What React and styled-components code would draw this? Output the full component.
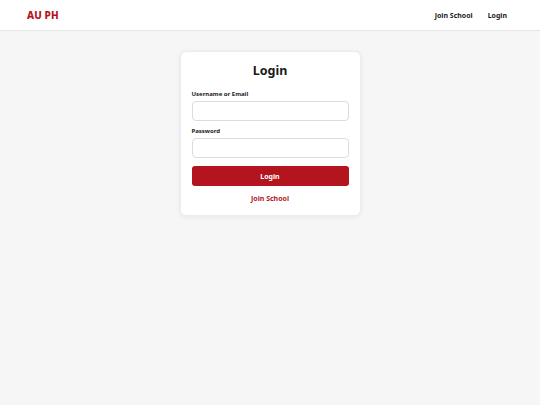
import React from "react";
import styled, { createGlobalStyle } from "styled-components";

const Global = createGlobalStyle`
  html, body { margin: 0; padding: 0; }
  body {
    background: #f6f6f6;
    font-family: "Noto Sans", "Open Sans", sans-serif;
    color: #1f1f1f;
  }
  * { box-sizing: border-box; }
`;

const Page = styled.div`
  min-height: 405px;
  background: #f6f6f6;
`;

const Header = styled.header`
  height: 31px;
  background: #ffffff;
  border-bottom: 1px solid #e6e6e6;
  display: flex;
  align-items: center;
  justify-content: space-between;
  padding: 0 33px 0 27px;
`;

const Brand = styled.div`
  color: #b3141e;
  font-weight: 800;
  font-size: 10px;
  letter-spacing: 0.1px;
`;

const Nav = styled.nav`
  display: flex;
  gap: 15px;
`;

const NavLink = styled.a`
  font-size: 7px;
  font-weight: 700;
  color: #1a1a1a;
  text-decoration: none;
`;

const Main = styled.main`
  display: flex;
  justify-content: center;
  padding-top: 20px;
`;

const Card = styled.div`
  width: 181px;
  background: #ffffff;
  border: 1px solid #ececec;
  border-radius: 6px;
  box-shadow: 0 1px 5px rgba(0, 0, 0, 0.07);
  padding: 11px 11px 11px;
  display: flex;
  flex-direction: column;
`;

const Title = styled.h1`
  margin: 0 0 11px;
  font-size: 12.5px;
  line-height: 16px;
  font-weight: 700;
  text-align: center;
  color: #1a1a1a;
`;

const Field = styled.div`
  display: flex;
  flex-direction: column;
  gap: 2px;
  margin-bottom: ${(p) => p.$mb}px;
`;

const Label = styled.label`
  font-size: 6px;
  line-height: 9px;
  font-weight: 700;
  color: #1a1a1a;
`;

const Input = styled.input`
  height: 20px;
  width: 100%;
  border: 1px solid #dcdcdc;
  border-radius: 4px;
  background: #fff;
  outline: none;
  font-family: inherit;
`;

const Button = styled.button`
  height: 20px;
  width: 100%;
  border: none;
  border-radius: 3px;
  background: #b3141e;
  color: #ffffff;
  font-family: inherit;
  font-size: 7px;
  font-weight: 700;
  cursor: pointer;
  margin-bottom: 8px;
`;

const JoinLink = styled.a`
  align-self: center;
  color: #b3141e;
  font-size: 7px;
  line-height: 10px;
  font-weight: 700;
  text-decoration: none;
`;

export default function App() {
  return (
    <>
      <Global />
      <Page>
        <Header>
          <Brand>AU PH</Brand>
          <Nav>
            <NavLink href="#">Join School</NavLink>
            <NavLink href="#">Login</NavLink>
          </Nav>
        </Header>
        <Main>
          <Card>
            <Title>Login</Title>
            <Field $mb={6}>
              <Label>Username or Email</Label>
              <Input type="text" />
            </Field>
            <Field $mb={8}>
              <Label>Password</Label>
              <Input type="password" />
            </Field>
            <Button>Login</Button>
            <JoinLink href="#">Join School</JoinLink>
          </Card>
        </Main>
      </Page>
    </>
  );
}
